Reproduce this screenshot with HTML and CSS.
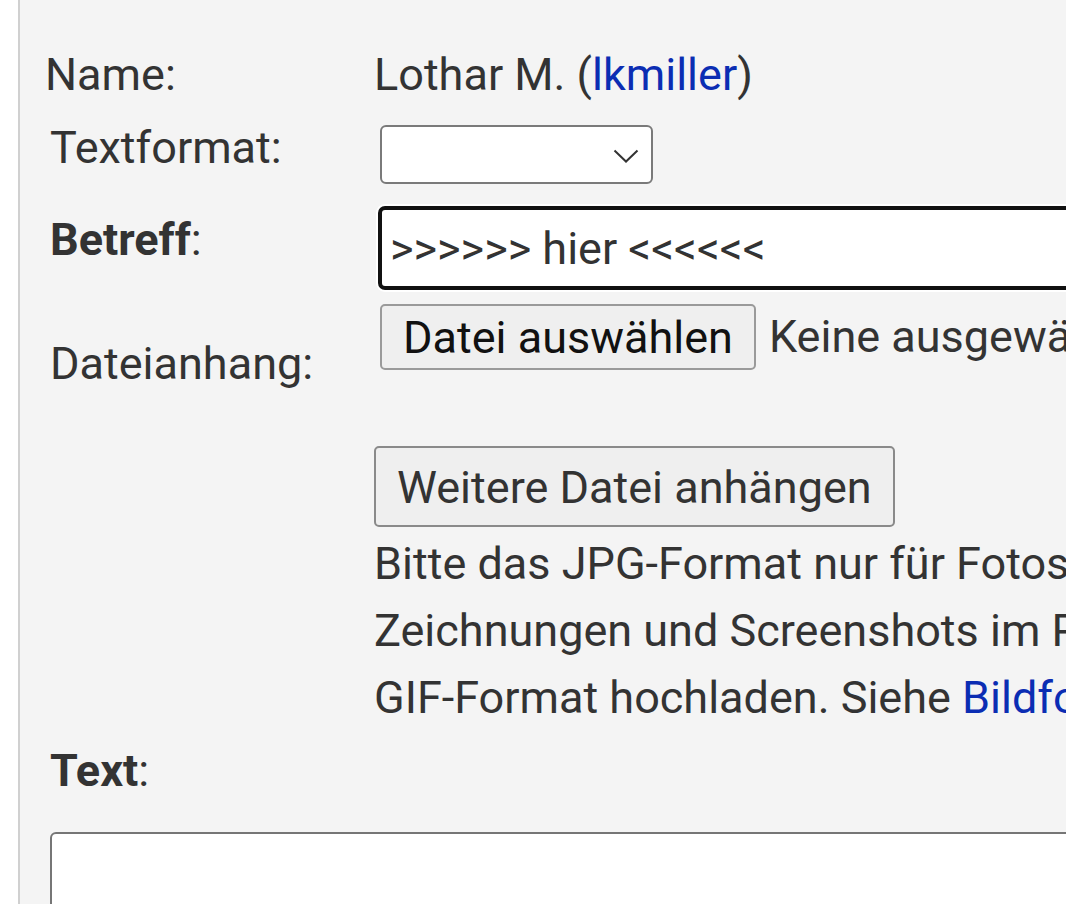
FILE: index.html
```html
<!DOCTYPE html>
<html lang="de">
<head>
<meta charset="utf-8">
<title>Beitrag</title>
<link rel="stylesheet" href="styles.css">
</head>
<body>
<div class="page">
  <div class="row row-name">
    <div class="label">Name:</div>
    <div class="value">Lothar M. (<a class="link" href="#">lkmiller</a>)</div>
  </div>
  <div class="row row-format">
    <div class="label">Textformat:</div>
    <div class="value">
      <div class="select">
        <svg class="chev" width="26" height="14" viewBox="0 0 26 14"><path d="M1.5 1.5 L13 12.5 L24.5 1.5" fill="none" stroke="#333" stroke-width="2"/></svg>
      </div>
    </div>
  </div>
  <div class="row row-subject">
    <div class="label"><b>Betreff</b>:</div>
    <div class="value">
      <div class="input">&gt;&gt;&gt;&gt;&gt;&gt; hier &lt;&lt;&lt;&lt;&lt;&lt;</div>
    </div>
  </div>
  <div class="row row-attach">
    <div class="label">Dateianhang:</div>
    <div class="value file">
      <span class="btn">Datei auswählen</span>
      <span class="nofile">Keine ausgewählte Datei</span>
    </div>
  </div>
  <div class="row row-more">
    <div class="label"></div>
    <div class="value more">
      <span class="btn2">Weitere Datei anhängen</span>
      <p class="help">Bitte das JPG-Format nur für Fotos und Scans verwenden,<br>Zeichnungen und Screenshots im PNG- oder<br>GIF-Format hochladen. Siehe <a class="link" href="#">Bildformate</a>.</p>
    </div>
  </div>
  <div class="label text-label"><b>Text</b>:</div>
  <div class="textarea"></div>
</div>
</body>
</html>
```

FILE: styles.css
```css
html, body {
  margin: 0;
  padding: 0;
  background: #ffffff;
  overflow: hidden;
  height: 904px;
}
body {
  font-family: Roboto, "Liberation Sans", Arial, sans-serif;
  color: #333333;
  font-size: 45px;
}
.page {
  margin-left: 18px;
  border-left: 2px solid #d0d0d0;
  background: #f4f4f4;
  height: 904px;
  padding-left: 30px;
  box-sizing: border-box;
  overflow: hidden;
}
.row {
  display: flex;
  align-items: flex-start;
  white-space: nowrap;
}
.label {
  width: 324px;
  flex: 0 0 324px;
  line-height: 52px;
}
.label b { font-weight: 700; }
.value {
  line-height: 52px;
}
.link {
  color: #0b2db3;
  text-decoration: none;
}
.row-name {
  padding-top: 49px;
  margin-left: -5px;
}
.row-name .label { width: 329px; flex-basis: 329px; }
.row-format {
  margin-top: 24px;
}
.row-format .label { margin-top: -3px; }
.row-format .value { padding-left: 6px; }
.select {
  width: 257px;
  height: 55px;
  border: 2px solid #7a7a7a;
  border-radius: 6px;
  background: #ffffff;
  display: flex;
  align-items: center;
  justify-content: flex-end;
  padding-right: 12px;
  box-sizing: content-box;
}
.chev { display: block; margin-top: 2px; }
.row-subject {
  margin-top: 22px;
}
.row-subject .label { margin-top: 8px; }
.row-subject .value { padding-left: 4px; }
.input {
  width: 760px;
  height: 76px;
  border: 4px solid #111111;
  border-radius: 7px;
  background: #ffffff;
  box-shadow: 0 0 0 2px #ffffff;
  padding-left: 8px;
  line-height: 78px;
  font-size: 45px;
  color: #333333;
  box-sizing: content-box;
}
.row-attach {
  margin-top: 14px;
}
.row-attach .label { margin-top: 34px; }
.file {
  display: flex;
  align-items: center;
  padding-left: 6px;
}
.btn {
  display: inline-block;
  height: 62px;
  line-height: 64px;
  padding: 0 21px;
  border: 2px solid #9a9a9a;
  border-radius: 5px;
  background: #efefef;
  color: #111111;
  font-size: 45px;
}
.nofile {
  margin-left: 13px;
  font-size: 45px;
  color: #333333;
}
.row-more {
  margin-top: 56px;
}
.more {
  display: flex;
  flex-direction: column;
  align-items: flex-start;
}
.btn2 {
  display: inline-block;
  height: 77px;
  line-height: 79px;
  padding: 0 21px;
  border: 2px solid #8a8a8a;
  border-radius: 5px;
  background: #efefef;
  color: #333333;
  font-size: 45px;
}
.help {
  margin: 3px 0 0 0;
  line-height: 67px;
  font-size: 45px;
}
.text-label {
  margin-top: 14px;
}
.textarea {
  margin-top: 35px;
  width: 1100px;
  height: 200px;
  border: 2px solid #767676;
  border-radius: 6px;
  background: #ffffff;
}
```
